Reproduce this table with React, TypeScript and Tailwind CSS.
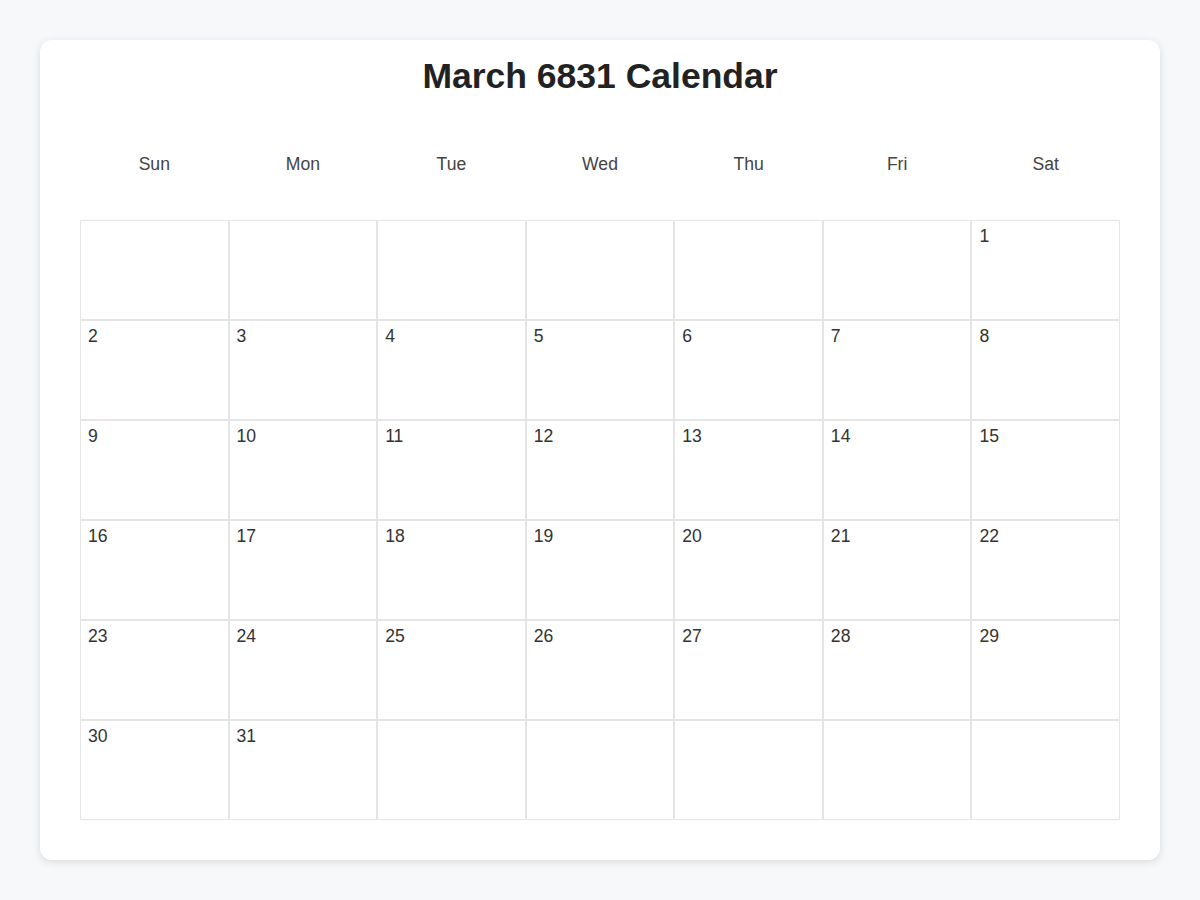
import React from "react";

const days = ["Sun", "Mon", "Tue", "Wed", "Thu", "Fri", "Sat"];

export default function App() {
  const cells: (number | null)[] = [];
  for (let i = 0; i < 6; i++) cells.push(null);
  for (let d = 1; d <= 31; d++) cells.push(d);
  while (cells.length < 42) cells.push(null);

  return (
    <div
      className="min-h-[900px] w-full bg-[#f7f8fa] p-10"
      style={{ fontFamily: '"Liberation Sans", Arial, sans-serif' }}
    >
      <div className="rounded-xl bg-white px-10 pt-[16px] pb-[40px] shadow-[0_2px_8px_rgba(0,0,0,0.12)]">
        <h1 className="m-0 text-center text-[35.5px] font-bold leading-[41px] text-[#222]">
          March 6831 Calendar
        </h1>
        <div className="mt-[45px] grid grid-cols-7">
          {days.map((d) => (
            <div key={d} className="flex h-[45px] items-center justify-center text-[17.6px] text-[#444]">
              {d}
            </div>
          ))}
        </div>
        <div className="mt-[33px] grid grid-cols-7">
          {cells.map((c, i) => (
            <div
              key={i}
              className="h-[100px] border border-[#e5e5e5] pl-[7px] pr-2 pt-[5px] text-[17.6px] leading-[20px] text-[#333]"
            >
              {c ?? ""}
            </div>
          ))}
        </div>
      </div>
    </div>
  );
}
